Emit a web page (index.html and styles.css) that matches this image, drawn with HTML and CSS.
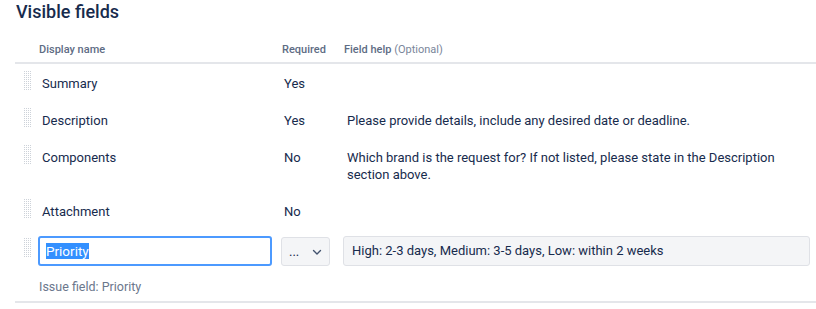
FILE: index.html
```html
<!DOCTYPE html>
<html lang="en">
<head>
    <meta charset="UTF-8">
    <title>Visible fields</title>
    <link rel="stylesheet" href="styles.css">
</head>
<body>
    <h2 class="title">Visible fields</h2>
    <div class="fields">
        <div class="head"></div>
        <div class="head">Display name</div>
        <div class="head">Required</div>
        <div class="head">Field help <span class="opt">(Optional)</span></div>

        <div class="cell handle-cell"><span class="handle"></span></div>
        <div class="cell name">Summary</div>
        <div class="cell req">Yes</div>
        <div class="cell help"></div>

        <div class="cell handle-cell"><span class="handle"></span></div>
        <div class="cell name">Description</div>
        <div class="cell req">Yes</div>
        <div class="cell help">Please provide details, include any desired date or deadline.</div>

        <div class="cell handle-cell"><span class="handle"></span></div>
        <div class="cell name">Components</div>
        <div class="cell req">No</div>
        <div class="cell help">Which brand is the request for? If not listed, please state in the Description section above.</div>

        <div class="cell handle-cell"><span class="handle"></span></div>
        <div class="cell name">Attachment</div>
        <div class="cell req">No</div>
        <div class="cell help"></div>

        <div class="edit handle-cell"><span class="handle"></span></div>
        <div class="edit"><div class="name-input"><span class="selected">Priority</span></div></div>
        <div class="edit">
            <div class="req-select">
                <span>...</span>
                <svg width="12" height="12" viewBox="0 0 12 12"><path d="M2.5 4.5 L6 8 L9.5 4.5" fill="none" stroke="#42526e" stroke-width="1.4" stroke-linecap="round" stroke-linejoin="round"/></svg>
            </div>
        </div>
        <div class="edit"><div class="help-input">High: 2-3 days, Medium: 3-5 days, Low: within 2 weeks</div></div>

        <div class="footer">Issue field: Priority</div>
    </div>
</body>
</html>
```

FILE: styles.css
```css
body {
    margin: 0;
    font-family: Roboto, "Noto Sans", sans-serif;
    color: #172b4d;
    background: #fff;
}
.title {
    margin: 0;
    padding: 0 0 0 16px;
    font-size: 18px;
    font-weight: 500;
    line-height: 24px;
    height: 36px;
}
.fields {
    margin-left: 15px;
    display: grid;
    grid-template-columns: 23px 243px 62px 1fr;
    font-size: 13px;
}
.head {
    font-size: 11px;
    font-weight: 500;
    color: #5e6c84;
    height: 26px;
    line-height: 27px;
    border-bottom: 2px solid #e4e6ea;
    padding-left: 1px;
}
.head .opt {
    font-weight: 400;
    color: #7a869a;
}
.cell {
    padding: 11px 0 9px;
    line-height: 17px;
}
.name {
    padding-left: 4px;
}
.req {
    padding-left: 3px;
}
.help {
    padding-left: 4px;
    padding-right: 20px;
}
.handle-cell {
    padding-left: 8px;
    padding-top: 6px;
}
.handle {
    display: block;
    width: 8px;
    height: 20px;
    background-color: #cdd2d9;
    background-image:
        linear-gradient(90deg, #fff 1px, transparent 1px),
        linear-gradient(#fff 1px, transparent 1px);
    background-size: 2px 2px;
}
.edit {
    padding-top: 7px;
}
.edit.handle-cell {
    padding-top: 8px;
}
.name-input {
    height: 26px;
    margin-right: 9px;
    border: 2px solid #4c9aff;
    border-radius: 3px;
    padding: 0 6px;
    line-height: 26px;
    font-size: 13.5px;
}
.selected {
    background: #3390ff;
    color: #fff;
}
.req-select {
    display: flex;
    align-items: center;
    justify-content: space-between;
    width: 49px;
    height: 29px;
    box-sizing: border-box;
    margin-top: 1px;
    padding: 0 6px 0 7px;
    background: #f4f5f7;
    border: 1px solid #dfe1e6;
    border-radius: 3px;
    font-size: 13px;
}
.help-input {
    height: 28px;
    margin-right: 6px;
    background: #f4f5f7;
    border: 1px solid #dfe1e6;
    border-radius: 3px;
    padding: 0 8px;
    line-height: 28px;
}
.footer {
    grid-column: 2 / 5;
    font-size: 12.5px;
    color: #6b778c;
    padding: 12px 0 5px 24px;
    line-height: 18px;
    border-bottom: 2px solid #e4e6ea;
    margin-left: -23px;
}
```
